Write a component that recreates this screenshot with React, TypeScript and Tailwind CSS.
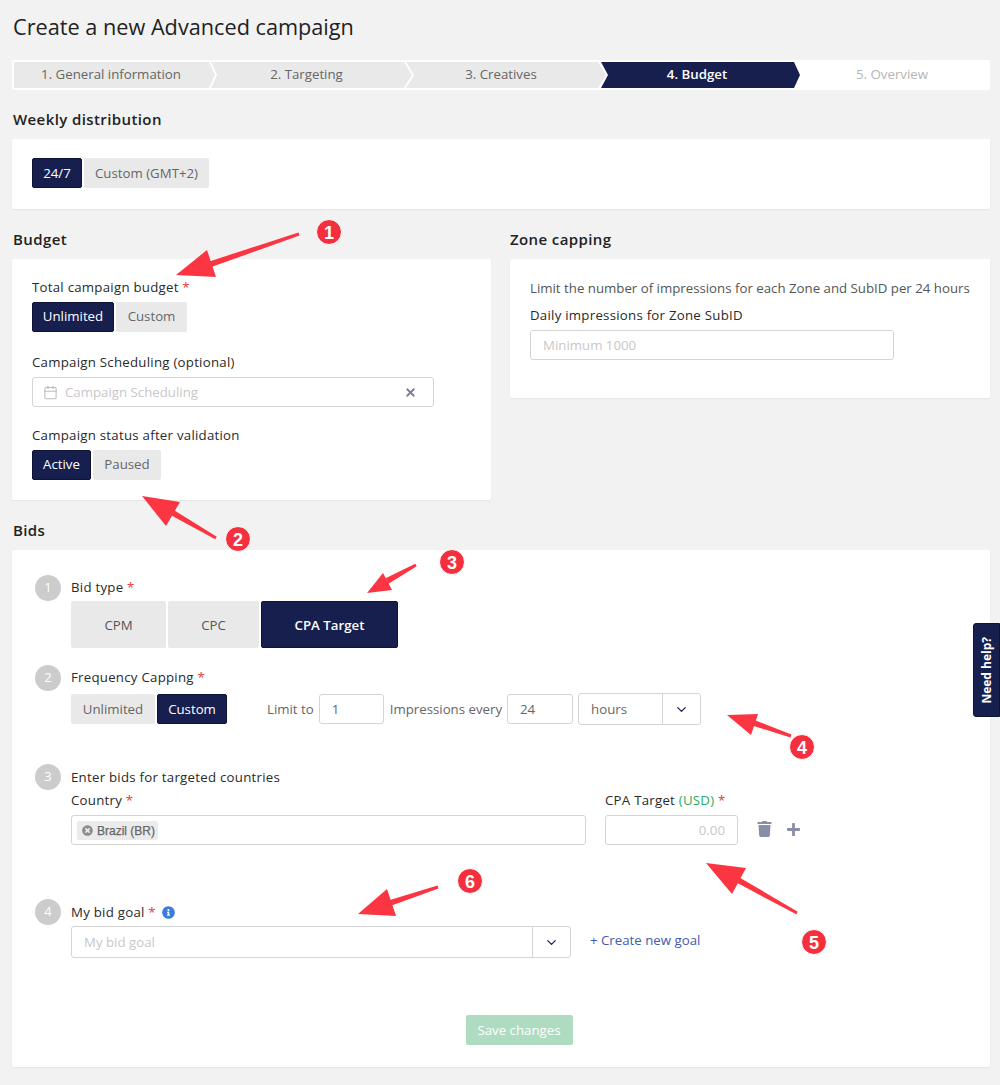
import React from "react";
import { Calendar, ChevronDown, X } from "lucide-react";
import { FaInfoCircle, FaPlus, FaTimesCircle, FaTrash } from "react-icons/fa";

const STEPS = [
  { label: "1. General information", cls: "w-[201px] -mr-[4px] pr-[7px] bg-[#e9e9e9] text-[#666] [clip-path:polygon(0_0,calc(100%-6px)_0,100%_50%,calc(100%-6px)_100%,0_100%)]" },
  { label: "2. Targeting", cls: "w-[201px] -mr-[6px] pr-[10px] bg-[#e9e9e9] text-[#666] [clip-path:polygon(0_0,calc(100%-8px)_0,100%_50%,calc(100%-8px)_100%,0_100%,6px_50%)]" },
  { label: "3. Creatives", cls: "w-[200px] -mr-[5px] pr-[10px] bg-[#e9e9e9] text-[#666] [clip-path:polygon(0_0,calc(100%-8px)_0,100%_50%,calc(100%-8px)_100%,0_100%,8px_50%)]" },
  { label: "4. Budget", cls: "w-[199px] -mr-[6px] pr-[7px] bg-[#171f4f] text-white font-semibold [clip-path:polygon(0_0,calc(100%-6px)_0,100%_50%,calc(100%-6px)_100%,0_100%,7px_50%)]" },
];

// red callouts drawn on top of the screenshot
const ARROWS = [
  { head: "176,275 207,250 216,277", tail: [299, 234, 211, 264], n: 1, x: 329, y: 232 },
  { head: "142,496 180,502 166,526", tail: [216, 538, 173, 513], n: 2, x: 238, y: 539 },
  { head: "367,593 383,573 392,590", tail: [416, 565, 387, 581], n: 3, x: 452, y: 562 },
  { head: "727,715 758,714 751,735", tail: [791, 736, 754, 723], n: 4, x: 802, y: 747 },
  { head: "706,863 746,868 732,894", tail: [797, 913, 738, 880], n: 5, x: 814, y: 942 },
  { head: "358,914 387,889 396,916", tail: [438, 887, 390, 903], n: 6, x: 470, y: 881 },
];

// shaft is thinner at the tail than where it meets the head
function shaft([x1, y1, x2, y2]: number[]) {
  const len = Math.hypot(x2 - x1, y2 - y1);
  const nx = (y2 - y1) / len;
  const ny = (x1 - x2) / len;
  const a = 1.5;
  const b = 3;
  return [
    [x1 + nx * a, y1 + ny * a],
    [x2 + nx * b, y2 + ny * b],
    [x2 - nx * b, y2 - ny * b],
    [x1 - nx * a, y1 - ny * a],
  ]
    .map((p) => p.join(","))
    .join(" ");
}

function Star() {
  return <span className="text-[#e5383b]"> *</span>;
}

function Label({ children }: { children: React.ReactNode }) {
  return <div className="h-5 text-[13.25px] leading-5 tracking-[0.25px] text-[#2a2a2a]">{children}</div>;
}

function Heading({ children }: { children: React.ReactNode }) {
  return <div className="h-5 text-[15px] leading-5 font-semibold tracking-[0.4px] text-[#222]">{children}</div>;
}

function Toggle({ items, active, tall, flat }: { items: { label: string; w: string }[]; active: number; tall?: boolean; flat?: boolean }) {
  return (
    <div className={`flex gap-[2px] ${tall ? "h-[47px]" : "h-[30px]"}`}>
      {items.map((item, i) => (
        <div
          key={item.label}
          className={`flex items-center justify-center rounded-[2px] text-[13.25px] ${flat ? "" : "pt-[2px]"} ${item.w} ${
            i === active
              ? `bg-[#171f4f] border border-[#0e1336] text-white ${tall ? "font-semibold" : "font-medium"}`
              : `bg-[#e9e9e9] ${tall ? "text-[#555]" : "text-[#666]"}`
          }`}
        >
          {item.label}
        </div>
      ))}
    </div>
  );
}

function Circle({ n }: { n: number }) {
  return (
    <div className="w-[26px] h-[26px] shrink-0 rounded-full bg-[#cccccc] flex items-center justify-center text-[13px] text-white">
      {n}
    </div>
  );
}

function Select({ value, placeholder, w, h, divider }: { value?: string; placeholder?: string; w: string; h: string; divider: string }) {
  return (
    <div className={`flex rounded-[3px] border border-[#d5d5d5] bg-white ${w} ${h}`}>
      <div className={`flex-1 flex items-center pl-3 pt-[2px] text-[13.25px] ${value ? "text-[#666]" : "text-[#c8c8c8]"}`}>
        {value || placeholder}
      </div>
      <div className={`flex items-center justify-center border-l border-[#d5d5d5] ${divider}`}>
        <ChevronDown className="w-[15px] h-[15px] text-[#171f4f]" strokeWidth={2} />
      </div>
    </div>
  );
}

export default function App() {
  return (
    <div className="relative w-[1000px] h-[1085px] overflow-hidden bg-[#f2f2f2] pl-[12px] pr-[10px] pt-[13px] font-['Open_Sans',sans-serif]">
      <h1 className="h-7 pl-px text-[21.7px] leading-7 text-[#222]">Create a new Advanced campaign</h1>

      {/* Stepper */}
      <div className="mt-[19px] h-[30px] flex bg-white p-[2px] pr-0 rounded-[2px]">
        {STEPS.map((s) => (
          <div key={s.label} className={`shrink-0 flex items-center justify-center text-[13.25px] ${s.cls}`}>
            {s.label}
          </div>
        ))}
        <div className="flex-1 flex items-center justify-center text-[13.25px] text-[#b5b5b5]">5. Overview</div>
      </div>

      <div className="mt-[19px] pl-px">
        <Heading>Weekly distribution</Heading>
      </div>
      <div className="mt-[10px] h-[70px] bg-white rounded-[2px] shadow-[0_1px_2px_rgba(0,0,0,0.06)] pl-[20px] pt-[19px]">
        <Toggle items={[{ label: "24/7", w: "w-[50px]" }, { label: "Custom (GMT+2)", w: "w-[125px]" }]} active={0} />
      </div>

      <div className="mt-5 flex gap-[19px] items-start">
        <div className="w-[479px]">
          <div className="pl-px">
            <Heading>Budget</Heading>
          </div>
          <div className="mt-[10px] h-[241px] bg-white rounded-[2px] shadow-[0_1px_2px_rgba(0,0,0,0.06)] pl-[20px] pt-[18px]">
            <Label>Total campaign budget<Star /></Label>
            <div className="mt-[5px]">
              <Toggle flat items={[{ label: "Unlimited", w: "w-[82px]" }, { label: "Custom", w: "w-[71px]" }]} active={0} />
            </div>
            <div className="mt-5">
              <Label>Campaign Scheduling (optional)</Label>
            </div>
            <div className="mt-[5px] w-[402px] h-[30px] flex items-center rounded-[3px] border border-[#d5d5d5] pl-[10px] pr-[16px]">
              <Calendar className="w-[15px] h-[15px] text-[#bdbdbd]" strokeWidth={1.75} />
              <span className="ml-[7px] pt-[2px] flex-1 text-[13.25px] text-[#c8c8c8]">Campaign Scheduling</span>
              <X className="w-[13px] h-[13px] text-[#7d8099]" strokeWidth={3.5} />
            </div>
            <div className="mt-[18px]">
              <Label>Campaign status after validation</Label>
            </div>
            <div className="mt-[5px]">
              <Toggle flat items={[{ label: "Active", w: "w-[59px]" }, { label: "Paused", w: "w-[68px]" }]} active={0} />
            </div>
          </div>
        </div>
        <div className="flex-1">
          <Heading>Zone capping</Heading>
          <div className="mt-[10px] h-[139px] bg-white rounded-[2px] shadow-[0_1px_2px_rgba(0,0,0,0.06)] pl-[20px] pt-[19px]">
            <div className="h-5 text-[13.25px] leading-5 text-[#555]">Limit the number of impressions for each Zone and SubID per 24 hours</div>
            <div className="mt-[7px]">
              <Label>Daily impressions for Zone SubID</Label>
            </div>
            <div className="mt-[5px] w-[364px] h-[30px] flex items-center rounded-[3px] border border-[#d5d5d5] pl-3 pt-[2px] text-[13.25px] text-[#c8c8c8]">
              Minimum 1000
            </div>
          </div>
        </div>
      </div>

      <div className="mt-5 pl-px">
        <Heading>Bids</Heading>
      </div>
      <div className="mt-[10px] h-[517px] bg-white rounded-[2px] shadow-[0_1px_2px_rgba(0,0,0,0.06)] pl-[23px] pt-[25px]">
        {/* 1 */}
        <div className="flex gap-[10px]">
          <Circle n={1} />
          <div className="pt-[2px]">
            <Label>Bid type<Star /></Label>
            <div className="mt-[4px]">
              <Toggle
                tall
                items={[
                  { label: "CPM", w: "w-[95px]" },
                  { label: "CPC", w: "w-[91px]" },
                  { label: "CPA Target", w: "w-[137px]" },
                ]}
                active={2}
              />
            </div>
          </div>
        </div>

        {/* 2 */}
        <div className="mt-[17px] flex gap-[10px]">
          <Circle n={2} />
          <div className="pt-[2px]">
            <Label>Frequency Capping<Star /></Label>
            <div className="mt-[7px] h-[30px] flex items-center">
              <Toggle items={[{ label: "Unlimited", w: "w-[84px]" }, { label: "Custom", w: "w-[70px]" }]} active={1} />
              <span className="ml-[40px] pt-[2px] text-[13.25px] text-[#666]">Limit to</span>
              <div className="ml-[5px] w-[65px] h-[30px] flex items-center pl-3 pt-[2px] rounded-[3px] border border-[#d5d5d5] text-[13.25px] text-[#666]">1</div>
              <span className="ml-[6px] pt-[2px] text-[13.25px] text-[#666]">Impressions every</span>
              <div className="ml-[5px] w-[66px] h-[30px] flex items-center pl-3 pt-[2px] rounded-[3px] border border-[#d5d5d5] text-[13.25px] text-[#666]">24</div>
              <div className="ml-[5px]">
                <Select value="hours" w="w-[123px]" h="h-[32px]" divider="w-[38px]" />
              </div>
            </div>
          </div>
        </div>

        {/* 3 */}
        <div className="mt-10 flex gap-[10px]">
          <Circle n={3} />
          <div className="pt-[3px]">
            <Label>Enter bids for targeted countries</Label>
            <div className="mt-[3px] flex">
              <div className="w-[534px]">
                <Label>Country<Star /></Label>
                <div className="mt-[5px] w-[515px] h-[30px] flex items-center rounded-[3px] border border-[#d5d5d5] pl-[5px]">
                  <div className="h-[19px] w-[81px] flex items-center gap-[4px] pl-[5px] rounded-[2px] bg-[#ebebeb] text-[12px] font-['Liberation_Sans',sans-serif] text-[#666] [-webkit-text-stroke:0.25px_#666]">
                    <FaTimesCircle className="w-[11px] h-[11px] text-[#8d8d8d]" />
                    <span className="pt-[2px]">Brazil (BR)</span>
                  </div>
                </div>
              </div>
              <div>
                <Label>CPA Target <span className="text-[#27ae60]">(USD)</span><Star /></Label>
                <div className="mt-[5px] flex items-center">
                  <div className="w-[133px] h-[30px] flex items-center justify-end pr-3 pt-[2px] rounded-[3px] border border-[#d5d5d5] text-[13.25px] text-[#c8c8c8]">0.00</div>
                  <FaTrash className="ml-[19px] mb-[2px] w-[15px] h-[16px] text-[#8a8da6]" />
                  <FaPlus className="ml-[14px] mb-[2px] w-[15px] h-[15px] text-[#8a8da6]" />
                </div>
              </div>
            </div>
          </div>
        </div>

        {/* 4 */}
        <div className="mt-[54px] flex gap-[10px]">
          <Circle n={4} />
          <div className="pt-[3px]">
            <div className="flex items-center">
              <Label>My bid goal<Star /></Label>
              <FaInfoCircle className="ml-[6px] w-[13px] h-[13px] text-[#3b7ddd]" />
            </div>
            <div className="mt-[4px] flex">
              <Select placeholder="My bid goal" w="w-[500px]" h="h-[32px]" divider="w-[38px]" />
              <span className="ml-[19px] mt-[4px] text-[13.25px] leading-5 text-[#3f5bb0]">+ Create new goal</span>
            </div>
          </div>
        </div>

        {/* Save */}
        <div className="mt-[57px] pl-[36px] pr-[23px] flex justify-center">
          <div className="w-[107px] h-[30px] flex items-center justify-center pt-[2px] rounded-[2px] bg-[#aedcc0] text-[13.25px] text-white">
            Save changes
          </div>
        </div>
      </div>

      {/* Help tab */}
      <div className="absolute right-0 top-[623px] w-[27px] h-[94px] flex items-center justify-center rounded-l-[3px] bg-[#171f4f] border border-[#0e1336]">
        <span className="[writing-mode:vertical-rl] rotate-180 text-[12px] font-bold text-white">Need help?</span>
      </div>

      {/* Annotations */}
      <svg className="absolute inset-0 pointer-events-none" width="1000" height="1085" viewBox="0 0 1000 1085">
        {ARROWS.map((a) => (
          <g key={a.n}>
            <polygon points={shaft(a.tail)} fill="#fb3542" />
            <polygon points={a.head} fill="#fb3542" />
            <circle cx={a.x} cy={a.y} r="12.5" fill="#f5303e" stroke="#ffffff" strokeWidth="1" />
            <text x={a.x} y={a.y + 6.5} textAnchor="middle" fontSize="18" fontWeight="700" fill="#ffffff" fontFamily="Liberation Sans, sans-serif">
              {a.n}
            </text>
          </g>
        ))}
      </svg>
    </div>
  );
}
